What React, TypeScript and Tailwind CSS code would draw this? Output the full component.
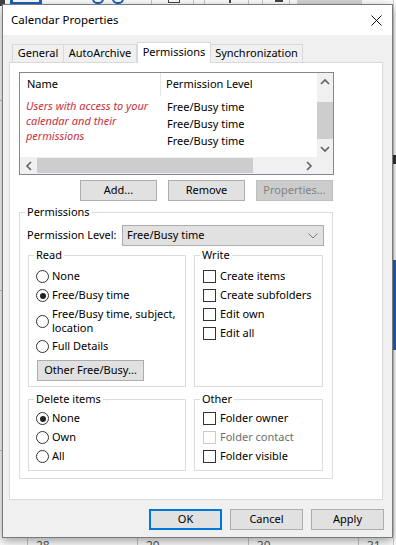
import React from "react";

function Radio({ checked }: { checked?: boolean }) {
  return (
    <span className="flex h-[13px] w-[13px] shrink-0 items-center justify-center rounded-full border border-[#333] bg-white">
      {checked && <span className="h-[6px] w-[6px] rounded-full bg-[#222]" />}
    </span>
  );
}

function Check({ disabled }: { disabled?: boolean }) {
  return (
    <span
      className={`block h-[13px] w-[13px] shrink-0 border bg-white ${
        disabled ? "border-[#cccccc]" : "border-[#333]"
      }`}
    />
  );
}

function Group({
  title,
  className,
  children,
}: {
  title: string;
  className?: string;
  children: React.ReactNode;
}) {
  return (
    <fieldset className={`border border-[#dcdcdc] ${className ?? ""}`}>
      <legend className="ml-[5px] px-[2px] leading-[16px]">{title}</legend>
      {children}
    </fieldset>
  );
}

function Button({
  label,
  disabled,
  primary,
  className,
}: {
  label: string;
  disabled?: boolean;
  primary?: boolean;
  className?: string;
}) {
  const tone = disabled
    ? "border border-[#bfbfbf] bg-[#cccccc] text-[#838383]"
    : primary
    ? "border-2 border-[#0078d7] bg-[#e1e1e1] text-black"
    : "border border-[#adadad] bg-[#e1e1e1] text-black";
  return (
    <div className={`flex h-[21px] items-center justify-center whitespace-nowrap ${tone} ${className ?? ""}`}>
      {label}
    </div>
  );
}

function Chevron({ dir }: { dir: "up" | "down" | "left" | "right" }) {
  const pts = {
    up: "1,6 5,2 9,6",
    down: "1,2 5,6 9,2",
    left: "6,1 2,5 6,9",
    right: "2,1 6,5 2,9",
  }[dir];
  const vertical = dir === "up" || dir === "down";
  return (
    <svg
      width={vertical ? 10 : 8}
      height={vertical ? 8 : 10}
      viewBox={vertical ? "0 0 10 8" : "0 0 8 10"}
    >
      <polyline points={pts} fill="none" stroke="#606060" strokeWidth="1.6" />
    </svg>
  );
}

function Background() {
  return (
    <>
      {/* top strip of the calendar window behind */}
      <div className="absolute left-0 top-0 h-[6px] w-[5px] bg-[#444]" />
      <div className="absolute left-[10px] top-0 h-[4px] w-[32px] border-x-[3px] border-b-[2px] border-[#1e63bf]" />
      <div className="absolute left-[92px] top-[-6px] h-[10px] w-[12px] rounded-full border-2 border-[#1e63bf]" />
      <div className="absolute left-[112px] top-[-6px] h-[10px] w-[12px] rounded-full border-2 border-[#1e63bf]" />
      <div className="absolute left-[151px] top-0 h-[4px] w-px bg-[#c8c8c8]" />
      <div className="absolute left-[168px] top-0 h-[3px] w-[12px] border-x border-b border-[#444]" />
      <div className="absolute left-[193px] top-0 h-[4px] w-px bg-[#c8c8c8]" />
      <div className="absolute left-[204px] top-0 h-[4px] w-px bg-[#c8c8c8]" />
      <div className="absolute left-[229px] top-0 h-[3px] w-[2px] bg-[#444]" />
      <div className="absolute left-[248px] top-0 h-[4px] w-px bg-[#c8c8c8]" />
      <div className="absolute left-[262px] top-0 h-[4px] w-px bg-[#c8c8c8]" />
      <div className="absolute left-[275px] top-0 h-[2px] w-[8px] bg-[#444]" />
      <div className="absolute left-[289px] top-0 h-[4px] w-px bg-[#c8c8c8]" />
      <div className="absolute left-[297px] top-0 h-[4px] w-[65px] bg-[#d6d6d6]" />

      {/* left and right strips */}
      <div className="absolute left-0 top-[100px] h-px w-[2px] bg-[#c0c0c0]" />
      <div className="absolute left-0 top-[290px] h-px w-[2px] bg-[#c0c0c0]" />
      <div className="absolute left-0 top-[450px] h-px w-[2px] bg-[#c0c0c0]" />
      <div className="absolute left-[393px] top-0 h-full w-px bg-[#d0d0d0]" />
      <div className="absolute left-[393px] top-[155px] h-[9px] w-[3px] bg-[#333]" />
      <div className="absolute left-[393px] top-[260px] h-[90px] w-[3px] bg-[#1e63bf]" />

      {/* bottom strip: dates */}
      <div className="absolute left-0 top-[536px] flex h-[9px] w-[396px] overflow-hidden text-[12px] leading-[14px] text-[#555]">
        <div className="w-[27px]" />
        <div className="w-[110px] border-l border-[#c8c8c8] pl-[8px] pt-[3px]">28</div>
        <div className="w-[111px] border-l border-[#c8c8c8] pl-[8px] pt-[3px]">29</div>
        <div className="w-[110px] border-l border-[#c8c8c8] pl-[8px] pt-[3px]">30</div>
        <div className="flex-1 border-l border-[#c8c8c8] pl-[8px] pt-[3px]">31</div>
      </div>
    </>
  );
}

export default function App() {
  return (
    <div className="relative h-[545px] w-[396px] overflow-hidden whitespace-nowrap bg-white font-['Segoe_UI','Noto_Sans',sans-serif] text-[11px] text-black">
      <Background />

      <div className="absolute left-[2px] top-[4px] flex h-[534px] w-[391px] flex-col border border-[#7a7a7a] bg-[#f0f0f0] shadow-[0_3px_10px_rgba(0,0,0,0.4)]">
        {/* title bar */}
        <div className="flex h-[30px] items-center justify-between bg-white pl-[8px] pr-[10px]">
          <span className="text-[11.5px]">Calendar Properties</span>
          <svg width="11" height="11" viewBox="0 0 11 11">
            <path d="M0.5 0.5 L10.5 10.5 M10.5 0.5 L0.5 10.5" stroke="#111" strokeWidth="1" />
          </svg>
        </div>

        {/* tabs */}
        <div className="ml-[9px] mt-[7px] flex h-[20px] items-end">
          <div className="flex h-[18px] w-[52px] items-center justify-center border border-b-0 border-[#d9d9d9]">
            General
          </div>
          <div className="flex h-[18px] w-[73px] items-center justify-center border border-b-0 border-l-0 border-[#d9d9d9]">
            AutoArchive
          </div>
          <div className="relative z-10 -mb-px flex h-[21px] w-[74px] items-start justify-center border border-b-0 border-[#d9d9d9] bg-white pt-[1px]">
            Permissions
          </div>
          <div className="flex h-[18px] w-[92px] items-center justify-center border border-b-0 border-l-0 border-[#d9d9d9]">
            Synchronization
          </div>
        </div>

        {/* tab panel */}
        <div className="ml-[6px] flex h-[438px] w-[374px] flex-col border border-[#d9d9d9] bg-white pl-[9px] pt-[9px]">
          {/* permission list */}
          <div className="flex h-[103px] w-[315px] flex-col border border-[#828790]">
            <div className="flex flex-1">
              <div className="flex flex-1 flex-col">
                <div className="flex h-[23px] items-center">
                  <div className="flex h-full w-[141px] items-center border-r border-[#e5e5e5] pl-[7px]">
                    Name
                  </div>
                  <div className="pl-[5px]">Permission Level</div>
                </div>
                <div className="mt-[2px] flex">
                  <div className="w-[141px] pl-[6px] italic leading-[15px] text-[#cc2f3b]">
                    <div>Users with access to your</div>
                    <div>calendar and their</div>
                    <div>permissions</div>
                  </div>
                  <div className="pl-[6px] leading-[17px]">
                    <div>Free/Busy time</div>
                    <div>Free/Busy time</div>
                    <div>Free/Busy time</div>
                  </div>
                </div>
              </div>
              <div className="flex w-[16px] flex-col bg-[#f0f0f0]">
                <div className="flex h-[17px] items-center justify-center">
                  <Chevron dir="up" />
                </div>
                <div className="mt-[12px] h-[37px] bg-[#cdcdcd]" />
                <div className="flex-1" />
                <div className="flex h-[17px] items-center justify-center">
                  <Chevron dir="down" />
                </div>
              </div>
            </div>
            <div className="flex h-[17px] bg-[#f0f0f0]">
              <div className="flex w-[17px] items-center justify-center">
                <Chevron dir="left" />
              </div>
              <div className="my-[1px] w-[216px] bg-[#cdcdcd]" />
              <div className="flex-1" />
              <div className="flex w-[17px] items-center justify-center">
                <Chevron dir="right" />
              </div>
              <div className="w-[16px]" />
            </div>
          </div>

          {/* list buttons */}
          <div className="mt-[5px] flex w-[314px] justify-end gap-[11px]">
            <Button label="Add..." className="w-[77px]" />
            <Button label="Remove" className="w-[77px]" />
            <Button label="Properties..." disabled className="w-[77px]" />
          </div>

          {/* permissions group */}
          <Group title="Permissions" className="mt-[3px] w-[314px] pb-[7px]">
            <div className="mt-[5px] flex h-[21px] items-center pl-[7px] pr-[8px]">
              <span className="w-[95px]">Permission Level:</span>
              <div className="flex h-[21px] flex-1 items-center justify-between border border-[#adadad] bg-[#e1e1e1] pl-[4px] pr-[5px]">
                <span>Free/Busy time</span>
                <svg width="10" height="6" viewBox="0 0 10 6">
                  <polyline points="0.5,0.5 5,5 9.5,0.5" fill="none" stroke="#7a7a7a" strokeWidth="1" />
                </svg>
              </div>
            </div>

            <div className="mt-px flex gap-[8px] pl-[8px]">
              <Group title="Read" className="w-[158px] pb-[5px]">
                <div className="flex flex-col px-[7px] pt-[4px]">
                  <div className="flex h-[19px] items-center gap-[3px]">
                    <Radio />
                    <span>None</span>
                  </div>
                  <div className="flex h-[19px] items-center gap-[3px]">
                    <Radio checked />
                    <span>Free/Busy time</span>
                  </div>
                  <div className="flex h-[32px] items-center gap-[3px]">
                    <Radio />
                    <span className="leading-[14px]">
                      Free/Busy time, subject,
                      <br />
                      location
                    </span>
                  </div>
                  <div className="flex h-[19px] items-center gap-[3px]">
                    <Radio />
                    <span>Full Details</span>
                  </div>
                  <Button label="Other Free/Busy..." className="ml-px mt-[4px] w-[107px]" />
                </div>
              </Group>

              <Group title="Write" className="w-[129px]">
                <div className="flex flex-col px-[8px] pt-[4px]">
                  {["Create items", "Create subfolders", "Edit own", "Edit all"].map((label) => (
                    <div key={label} className="flex h-[19px] items-center gap-[4px]">
                      <Check />
                      <span>{label}</span>
                    </div>
                  ))}
                </div>
              </Group>
            </div>

            <div className="mt-[4px] flex gap-[8px] pl-[8px]">
              <Group title="Delete items" className="w-[158px] pb-[4px]">
                <div className="flex flex-col px-[7px] pt-[2px]">
                  <div className="flex h-[19px] items-center gap-[3px]">
                    <Radio checked />
                    <span>None</span>
                  </div>
                  <div className="flex h-[19px] items-center gap-[3px]">
                    <Radio />
                    <span>Own</span>
                  </div>
                  <div className="flex h-[19px] items-center gap-[3px]">
                    <Radio />
                    <span>All</span>
                  </div>
                </div>
              </Group>

              <Group title="Other" className="w-[129px] pb-[4px]">
                <div className="flex flex-col px-[8px] pt-[2px]">
                  <div className="flex h-[19px] items-center gap-[4px]">
                    <Check />
                    <span>Folder owner</span>
                  </div>
                  <div className="flex h-[19px] items-center gap-[4px]">
                    <Check disabled />
                    <span className="text-[#6d6d6d]">Folder contact</span>
                  </div>
                  <div className="flex h-[19px] items-center gap-[4px]">
                    <Check />
                    <span>Folder visible</span>
                  </div>
                </div>
              </Group>
            </div>
          </Group>
        </div>

        {/* dialog buttons */}
        <div className="ml-[146px] mt-[9px] flex gap-[8px]">
          <Button label="OK" primary className="w-[73px]" />
          <Button label="Cancel" className="w-[73px]" />
          <Button label="Apply" className="w-[73px]" />
        </div>
      </div>
    </div>
  );
}
